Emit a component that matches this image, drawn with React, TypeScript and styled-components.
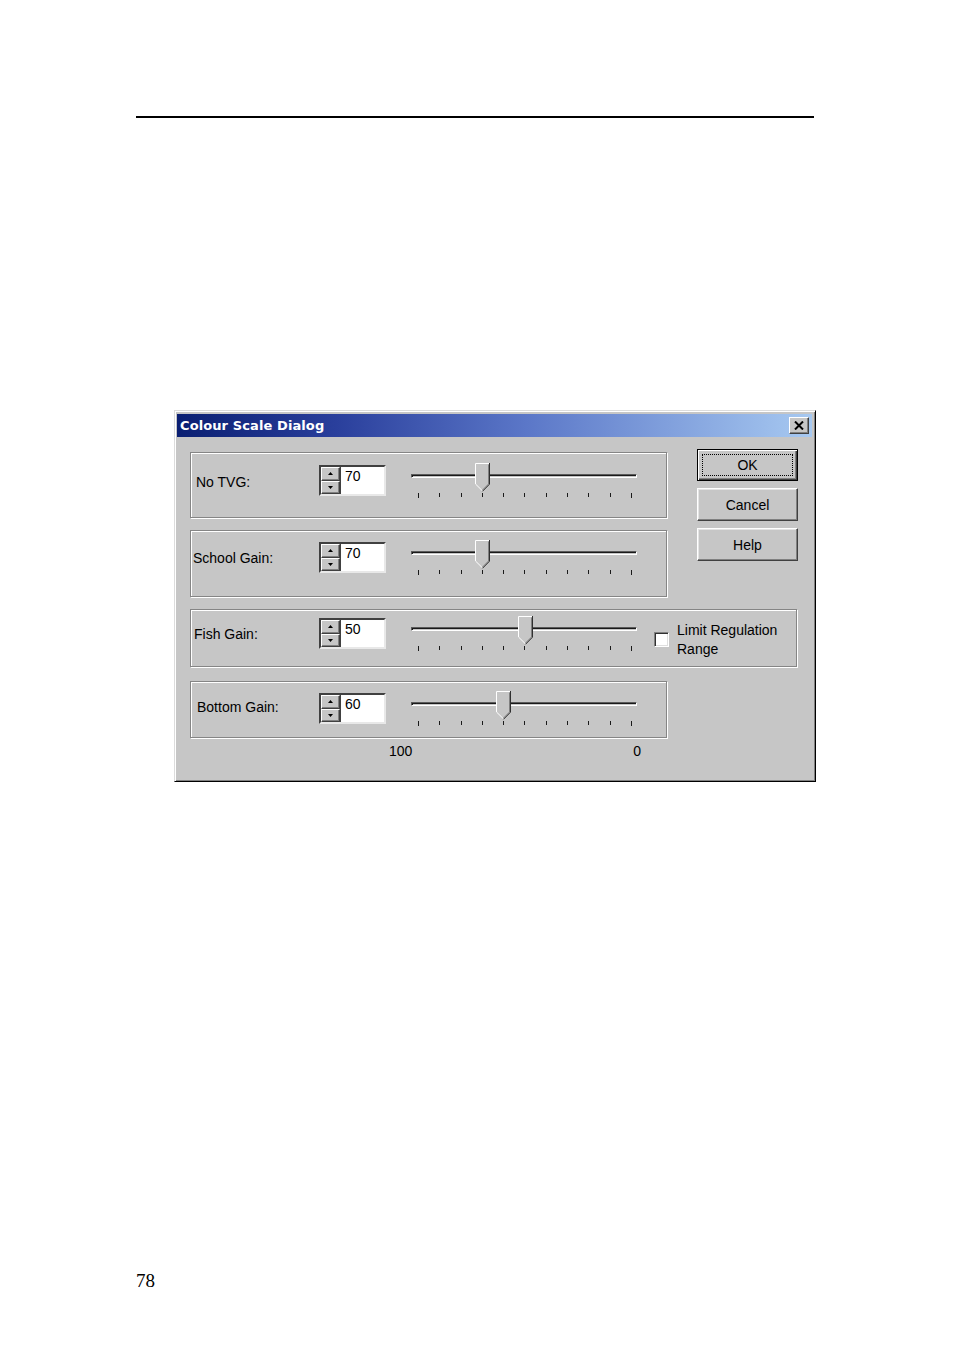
import React from 'react';
import styled, { createGlobalStyle, css } from 'styled-components';

const GlobalStyle = createGlobalStyle`
  html, body {
    margin: 0;
    padding: 0;
    background: #fff;
  }
  * {
    box-sizing: border-box;
  }
`;

const Page = styled.div`
  width: 954px;
  height: 1351px;
  display: flex;
  flex-direction: column;
  align-items: flex-start;
  padding: 116px 0 59px 136px;
  background: #fff;
`;

const Rule = styled.div`
  width: 678px;
  height: 2px;
  background: #000;
`;

const PageNumber = styled.div`
  margin-top: auto;
  font-family: 'Liberation Serif', 'Times New Roman', serif;
  font-size: 19px;
  line-height: 22px;
  color: #000;
`;

const Dialog = styled.div`
  width: 642px;
  height: 372px;
  margin: 292px 0 0 38px;
  padding: 3px 3px 0 2px;
  display: flex;
  flex-direction: column;
  background: #c6c6c6;
  border: 1px solid;
  border-color: #dcdcdc #000 #000 #dcdcdc;
  box-shadow: inset 1px 1px 0 #fff, inset -1px -1px 0 #808080;
  font-family: 'Liberation Sans', Arial, sans-serif;
  font-size: 14px;
  color: #000;
`;

const TitleBar = styled.div`
  height: 23px;
  display: flex;
  align-items: center;
  justify-content: space-between;
  padding: 0 3px;
  background: linear-gradient(to right, #0a1f72 0%, #2a3f9c 25%, #5b77c8 55%, #a7c9f1 100%);
`;

const Title = styled.span`
  font-family: 'DejaVu Sans', Verdana, sans-serif;
  font-weight: 700;
  font-size: 13px;
  letter-spacing: 0.1px;
  color: #fff;
  white-space: nowrap;
`;

const CloseButton = styled.div`
  width: 20px;
  height: 17px;
  display: flex;
  align-items: center;
  justify-content: center;
  background: #c6c6c6;
  border: 1px solid;
  border-color: #fff #404040 #404040 #fff;
  box-shadow: inset -1px -1px 0 #808080;
`;

const Body = styled.div`
  display: grid;
  grid-template-columns: 477px 100px;
  column-gap: 30px;
  row-gap: 12px;
  align-items: start;
  padding: 15px 0 0 13px;
`;

const Group = styled.div<{ $h: number; $pt: number; $span?: boolean; $mt?: number }>`
  grid-column: ${p => (p.$span ? '1 / -1' : '1')};
  height: ${p => p.$h}px;
  margin-top: ${p => p.$mt ?? 0}px;
  padding-top: ${p => p.$pt}px;
  display: flex;
  align-items: flex-start;
  border: 1px solid #858585;
  box-shadow: inset 1px 1px 0 #fff, 1px 1px 0 #fff;
`;

const Row = styled.div`
  height: 35px;
  display: flex;
  align-items: center;
`;

const Label = styled.div<{ $inset: number; $dy: number }>`
  width: 128px;
  margin-top: ${p => p.$dy}px;
  padding-left: ${p => p.$inset}px;
  white-space: nowrap;
`;

const Spin = styled.div`
  width: 67px;
  height: 31px;
  display: flex;
  border: 2px solid;
  border-color: #404040 #e8e8e8 #e8e8e8 #404040;
  background: #fff;
`;

const SpinButtons = styled.div`
  width: 20px;
  display: flex;
  flex-direction: column;
  border-right: 1px solid #404040;
`;

const SpinButton = styled.div`
  flex: 1;
  display: flex;
  align-items: center;
  justify-content: center;
  background: #c6c6c6;
  border: 1px solid;
  border-color: #fff #404040 #404040 #fff;
  box-shadow: inset -1px -1px 0 #808080;
`;

const Edit = styled.div`
  flex: 1;
  padding: 1px 0 0 4px;
  line-height: 16px;
`;

const SliderBox = styled.div`
  position: relative;
  width: 226px;
  height: 35px;
  margin-left: 25px;
  display: flex;
  flex-direction: column;
`;

const Track = styled.div`
  height: 4px;
  margin-top: 11px;
  border: 1px solid;
  border-color: #5a5a5a #fff #fff #5a5a5a;
  box-shadow: inset 1px 1px 0 #1a1a1a;
`;

const Ticks = styled.div`
  height: 5px;
  margin-top: 15px;
  padding: 0 5px 0 7px;
  display: flex;
  justify-content: space-between;
  align-items: flex-start;
`;

const Tick = styled.div<{ $long?: boolean }>`
  width: 1px;
  height: ${p => (p.$long ? 5 : 4)}px;
  background: #1a1a1a;
`;

const Thumb = styled.svg`
  position: absolute;
  top: 0;
  width: 15px;
  height: 29px;
`;

const Buttons = styled.div`
  grid-column: 2;
  grid-row: 1 / span 2;
  margin-top: -3px;
  display: flex;
  flex-direction: column;
  gap: 7px;
`;

const buttonBase = css`
  width: 101px;
  display: flex;
  align-items: center;
  justify-content: center;
  background: #c6c6c6;
  white-space: nowrap;
`;

const Button = styled.div`
  ${buttonBase};
  height: 33px;
  border: 1px solid;
  border-color: #fff #404040 #404040 #fff;
  box-shadow: inset -1px -1px 0 #808080, inset 1px 1px 0 #e4e4e4;
`;

const DefaultButton = styled.div`
  ${buttonBase};
  height: 32px;
  padding: 4px;
  border: 1px solid #000;
  box-shadow: inset 1px 1px 0 #fff, inset -1px -1px 0 #404040, inset -2px -2px 0 #808080;
`;

const FocusRing = styled.div`
  width: 100%;
  height: 100%;
  display: flex;
  align-items: center;
  justify-content: center;
  border: 1px dotted #000;
`;

const CheckRow = styled.div`
  height: 35px;
  margin: 6px 0 0 17px;
  display: flex;
  align-items: center;
  gap: 8px;
`;

const CheckBox = styled.div`
  width: 15px;
  height: 15px;
  background: #fff;
  border: 1px solid;
  border-color: #808080 #fff #fff #808080;
  box-shadow: inset 1px 1px 0 #303030, inset -1px -1px 0 #dfdfdf;
`;

const CheckLabel = styled.div`
  line-height: 19px;
`;

const Scale = styled.div`
  grid-column: 1;
  width: 252px;
  margin: -7px 0 0 199px;
  display: flex;
  justify-content: space-between;
  line-height: 16px;
`;

const Arrow: React.FC<{ up?: boolean }> = ({ up }) => (
  <svg width="5" height="3" viewBox="0 0 5 3">
    <polygon points={up ? '2.5,0 5,3 0,3' : '0,0 5,0 2.5,3'} fill="#000" />
  </svg>
);

const Slider: React.FC<{ value: number }> = ({ value }) => (
  <SliderBox>
    <Track />
    <Ticks>
      {Array.from({ length: 11 }).map((_, i) => (
        <Tick key={i} $long={i === 0 || i === 10} />
      ))}
    </Ticks>
    <Thumb viewBox="0 0 15 29" style={{ left: (100 - value) * 2.13 }}>
      <polygon points="0,0 15,0 15,21 7.5,28.5 0,21" fill="#c6c6c6" />
      <polyline points="0.5,21 0.5,0.5 14,0.5" fill="none" stroke="#fff" />
      <polyline points="0.5,21 7.2,27.6" fill="none" stroke="#fff" />
      <polyline points="13.5,1.5 13.5,21 7.5,27" fill="none" stroke="#808080" />
      <polyline points="14.5,0 14.5,21.2 7.5,28.3" fill="none" stroke="#303030" />
    </Thumb>
  </SliderBox>
);

const SpinBox: React.FC<{ value: number }> = ({ value }) => (
  <Spin>
    <SpinButtons>
      <SpinButton>
        <Arrow up />
      </SpinButton>
      <SpinButton>
        <Arrow />
      </SpinButton>
    </SpinButtons>
    <Edit>{value}</Edit>
  </Spin>
);

const App: React.FC = () => (
  <>
    <GlobalStyle />
    <Page>
      <Rule />
      <Dialog>
        <TitleBar>
          <Title>Colour Scale Dialog</Title>
          <CloseButton>
            <svg width="10" height="9" viewBox="0 0 10 9">
              <path d="M1 0.5 L9 8.5 M9 0.5 L1 8.5" stroke="#000" strokeWidth="2" />
            </svg>
          </CloseButton>
        </TitleBar>
        <Body>
          <Group $h={66} $pt={10}>
            <Row>
              <Label $inset={5} $dy={2}>No TVG:</Label>
              <SpinBox value={70} />
              <Slider value={70} />
            </Row>
          </Group>
          <Buttons>
            <DefaultButton>
              <FocusRing>OK</FocusRing>
            </DefaultButton>
            <Button>Cancel</Button>
            <Button>Help</Button>
          </Buttons>
          <Group $h={67} $pt={9}>
            <Row>
              <Label $inset={2} $dy={1}>School Gain:</Label>
              <SpinBox value={70} />
              <Slider value={70} />
            </Row>
          </Group>
          <Group $h={58} $pt={6} $span>
            <Row>
              <Label $inset={3} $dy={0}>Fish Gain:</Label>
              <SpinBox value={50} />
              <Slider value={50} />
            </Row>
            <CheckRow>
              <CheckBox />
              <CheckLabel>
                Limit Regulation
                <br />
                Range
              </CheckLabel>
            </CheckRow>
          </Group>
          <Group $h={57} $pt={9} $mt={2}>
            <Row>
              <Label $inset={6} $dy={-3}>Bottom Gain:</Label>
              <SpinBox value={60} />
              <Slider value={60} />
            </Row>
          </Group>
          <Scale>
            <span>100</span>
            <span>0</span>
          </Scale>
        </Body>
      </Dialog>
      <PageNumber>78</PageNumber>
    </Page>
  </>
);

export default App;
